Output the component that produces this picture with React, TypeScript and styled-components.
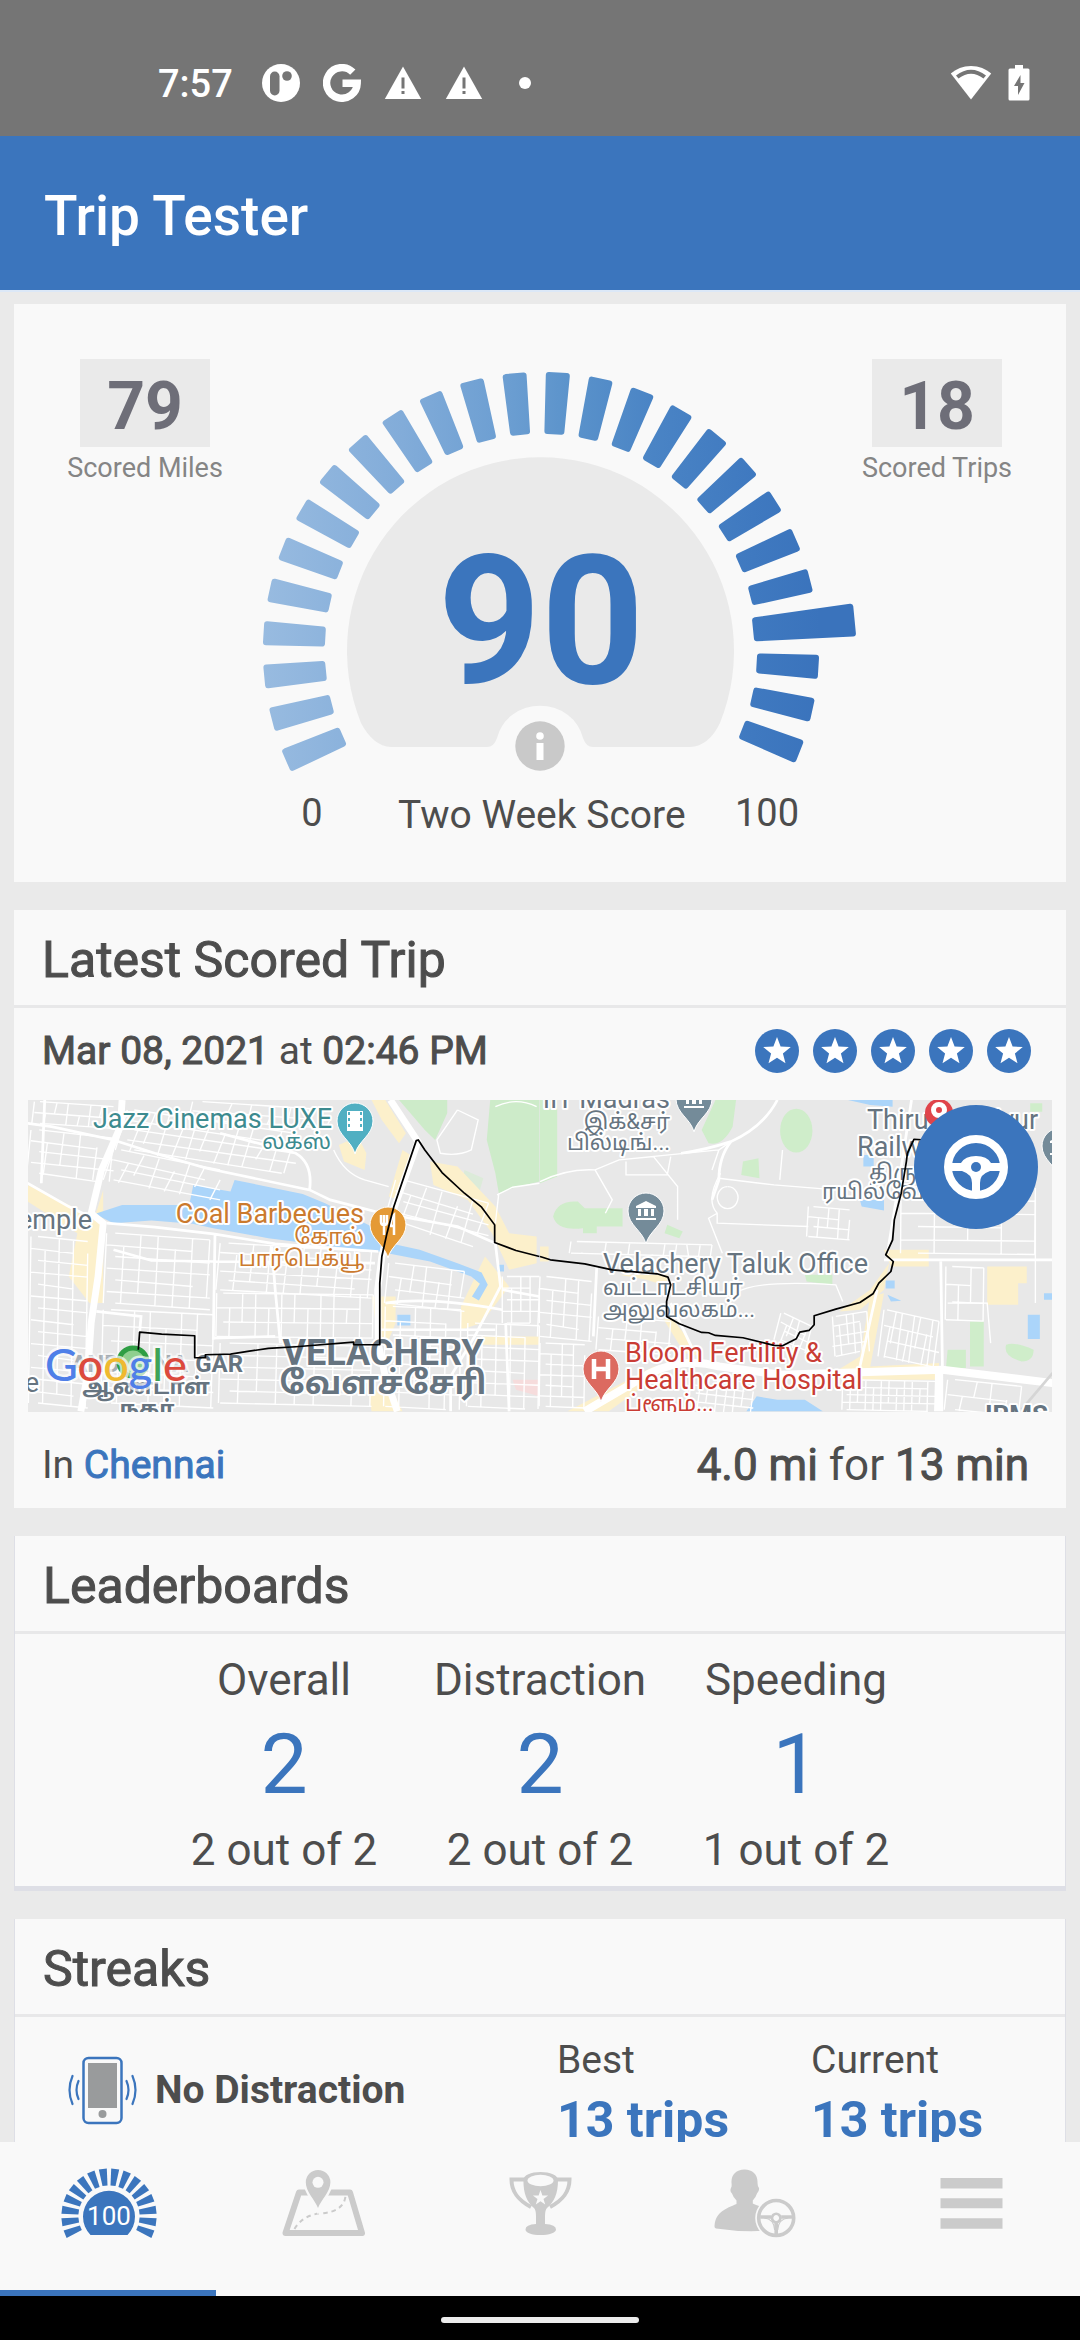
import React from "react";
import styled, { createGlobalStyle, css } from "styled-components";

const BLUE = "#3b75bd";
const INK = "#4d4d4d";
const CARD = "#f9f9f9";
const MUTED = "#cbcbcb";

const GlobalStyle = createGlobalStyle`
  *, *::before, *::after { box-sizing: border-box; }
  body { margin: 0; background: #eaeaea; }
  button { font: inherit; color: inherit; border: 0; padding: 0; background: none; cursor: pointer; }
  h1, h2, p, dl, dt, dd, ul { margin: 0; padding: 0; }
  svg { display: block; }
`;

/* Regular weight thickened by an outline, as the platform's synthetic bold. */
const syntheticBold = css`
  font-weight: 400;
  -webkit-text-stroke: 1px currentColor;
`;

const Screen = styled.div`
  display: flex;
  flex-direction: column;
  height: 100vh;
  overflow: hidden;
  background: #eaeaea;
  color: ${INK};
  font-family: Roboto, "Noto Sans", sans-serif;
`;

const StatusBar = styled.div`
  flex: none;
  display: flex;
  align-items: center;
  justify-content: space-between;
  height: 136px;
  padding: 30px 50px 0 158px;
  background: #757575;
  color: #fff;
`;

const StatusGroup = styled.div<{ $gap: number }>`
  display: flex;
  align-items: center;
  gap: ${(p) => p.$gap}px;
`;

const Clock = styled.span`
  margin-right: 6px;
  padding-top: 2px;
  font-size: 38px;
  line-height: 44px;
  font-weight: 500;
`;

const AppBar = styled.header`
  flex: none;
  display: flex;
  align-items: center;
  height: 154px;
  padding: 6px 44px 0;
  background: ${BLUE};
  color: #fff;
`;

const AppTitle = styled.h1`
  font-size: 55px;
  line-height: 64px;
  font-weight: 500;
`;

const Content = styled.main`
  flex: 1;
  min-height: 0;
  overflow: hidden;
  display: flex;
  flex-direction: column;
  gap: 28px;
  padding: 12px 14px 0;
  border-top: 2px solid #dce8f7;
`;

const Card = styled.section<{ $outlined?: boolean }>`
  flex: none;
  background: ${CARD};
  ${(p) =>
    p.$outlined &&
    css`
      border: solid #dedfe6;
      border-width: 0 1px 5px;
    `}
`;

const CardHeader = styled.div`
  display: flex;
  align-items: center;
  height: 98px;
  padding: 4px 28px 0;
  border-bottom: 3px solid #e8e8e9;
`;

const CardTitle = styled.h2`
  font-size: 50px;
  line-height: 60px;
  ${syntheticBold}
`;

/* ---------- Score card ---------- */

const ScoreLayout = styled.div`
  display: flex;
  align-items: flex-start;
  justify-content: space-between;
  height: 578px;
  padding: 55px 53px 0 55px;
`;

const Stat = styled.div`
  flex: none;
  display: flex;
  flex-direction: column;
  align-items: center;
  width: 152px;
`;

const StatValue = styled.strong`
  width: 130px;
  height: 88px;
  padding-top: 4px;
  background: #eaeaea;
  color: #6e6e78;
  font-size: 66px;
  line-height: 88px;
  font-weight: 700;
  text-align: center;
`;

const StatLabel = styled.span`
  color: #858585;
  font-size: 27px;
  line-height: 42px;
  white-space: nowrap;
`;

const Gauge = styled.div`
  flex: 1;
  max-width: 640px;
`;

const GaugeFace = styled.div`
  position: relative;

  & > svg {
    width: 100%;
    height: auto;
  }
`;

const GaugeScore = styled.strong`
  position: absolute;
  inset: 0;
  display: flex;
  align-items: center;
  justify-content: center;
  padding-top: 110px;
  color: ${BLUE};
  font-size: 180px;
  line-height: 200px;
  font-weight: 700;
`;

const InfoButton = styled.button`
  position: absolute;
  left: 50%;
  bottom: 4px;
  width: 50px;
  height: 50px;
  margin-left: -26px;
`;

const GaugeLegend = styled.div`
  display: grid;
  grid-template-columns: 172px 284px 170px;
  align-items: start;
  justify-content: start;
  margin-top: 16px;
  padding-left: 5px;
  font-size: 39px;
  line-height: 48px;
  text-align: center;
  white-space: nowrap;
`;

const LegendBound = styled.span`
  font-size: 38px;
  line-height: 44px;
`;

/* ---------- Trip card ---------- */

const TripRow = styled.div<{ $end?: boolean }>`
  display: flex;
  align-items: center;
  justify-content: space-between;
  height: ${(p) => (p.$end ? 96 : 92)}px;
  padding: ${(p) => (p.$end ? "10px 37px 0 28px" : "0 35px 6px 28px")};
`;

const TripText = styled.p<{ $large?: boolean }>`
  font-size: ${(p) => (p.$large ? 44 : 39)}px;
  line-height: 52px;

  b { ${syntheticBold} }
`;

const CityLink = styled.a`
  color: ${BLUE};
  text-decoration: none;
  ${syntheticBold}
`;

const Stars = styled.div`
  display: flex;
  gap: 14px;
`;

const MapFrame = styled.div`
  position: relative;
  height: 312px;
  margin: 0 14px;
  overflow: hidden;

  & > svg {
    width: 100%;
    height: 100%;
  }
`;

const DriveButton = styled.button`
  position: absolute;
  top: 5px;
  right: 14px;
  width: 124px;
  height: 124px;
  border-radius: 50%;
  background: ${BLUE};
`;

/* ---------- Leaderboards ---------- */

const Boards = styled.dl`
  display: grid;
  grid-template-columns: repeat(3, 256px);
  justify-content: center;
  padding: 20px 0 10px;
`;

const Board = styled.div`
  display: flex;
  flex-direction: column;
  align-items: center;
  padding: 20px 0 10px;
  font-size: 44px;
  line-height: 52px;
`;

const BoardGrid = styled(Boards)`
  padding: 0;
`;

const Rank = styled.dd`
  color: ${BLUE};
  font-size: 84px;
  line-height: 118px;
`;

/* ---------- Streaks ---------- */

const StreakRow = styled.div`
  display: grid;
  grid-template-columns: 1fr 254px 254px;
  align-items: center;
  padding-top: 13px;
`;

const StreakName = styled.div`
  display: flex;
  align-items: center;
  gap: 18px;
  padding-left: 52px;
  font-size: 39px;
  line-height: 48px;
  font-weight: 700;
`;

const StreakStat = styled.div`
  display: flex;
  flex-direction: column;
  font-size: 39px;
  line-height: 60px;
`;

const StreakValue = styled.strong`
  color: ${BLUE};
  font-size: 50px;
  line-height: 60px;
  font-weight: 700;
`;

/* ---------- Bottom navigation ---------- */

const TabBar = styled.nav`
  flex: none;
  display: flex;
  height: 154px;
  background: ${CARD};
`;

const Tab = styled.button<{ $active?: boolean }>`
  flex: 1;
  display: flex;
  justify-content: center;
  align-items: flex-start;
  padding-top: 24px;
  color: ${(p) => (p.$active ? BLUE : MUTED)};
  border-bottom: 6px solid ${(p) => (p.$active ? BLUE : "transparent")};
`;

const SystemBar = styled.div`
  flex: none;
  display: flex;
  justify-content: center;
  align-items: center;
  height: 44px;
  padding-top: 4px;
  background: #000;
`;

const HomeHandle = styled.span`
  width: 198px;
  height: 6px;
  border-radius: 3px;
  background: #ebebeb;
`;

/* ---------- Drawings ---------- */

type Point = [number, number];

const ray = (cx: number, cy: number, deg: number, r0: number, r1: number, w0: number, w1: number) => {
  const a = (deg * Math.PI) / 180;
  const at = (r: number, off: number): Point => [
    cx + r * Math.cos(a) - off * Math.sin(a),
    cy - r * Math.sin(a) - off * Math.cos(a),
  ];
  return [at(r0, w0 / 2), at(r1, w1 / 2), at(r1, -w1 / 2), at(r0, -w0 / 2)]
    .map(([x, y]) => `${x.toFixed(1)},${y.toFixed(1)}`)
    .join(" ");
};

const starPoints = (cx: number, cy: number, outer: number, inner: number) =>
  Array.from({ length: 10 }, (_, i) => {
    const r = i % 2 ? inner : outer;
    const a = -Math.PI / 2 + (i * Math.PI) / 5;
    return `${(cx + r * Math.cos(a)).toFixed(1)},${(cy + r * Math.sin(a)).toFixed(1)}`;
  }).join(" ");

const GaugeDial = () => (
  <svg viewBox="221 359 640 416" aria-hidden="true">
    <defs>
      <linearGradient id="dial" gradientUnits="userSpaceOnUse" x1="263" y1="0" x2="820" y2="0">
        <stop offset="0" stopColor="#98bbe0" />
        <stop offset="0.25" stopColor="#82acd9" />
        <stop offset="0.45" stopColor="#6a9dd1" />
        <stop offset="0.55" stopColor="#5b93cb" />
        <stop offset="0.7" stopColor="#4a84c5" />
        <stop offset="0.88" stopColor="#3f79c0" />
        <stop offset="1" stopColor="#3a73bc" />
      </linearGradient>
    </defs>
    <g fill="url(#dial)" stroke="url(#dial)" strokeWidth="6" strokeLinejoin="round">
      {Array.from({ length: 26 }, (_, i) => {
        const marked = i === 22;
        return (
          <polygon
            key={i}
            points={ray(541, 650, 203.5 - 9 * i, marked ? 216 : 219, marked ? 312 : 275, marked ? 18 : 14, marked ? 27 : 18)}
          />
        );
      })}
    </g>
    <path
      fill="#eaeaea"
      d="M391 747Q373 746 361 723A193.500 193.500 0 1 1 720 723Q709 746 690 747H593Q586 747 583 738A44 41 0 0 0 497 738Q494 747 487 747Z"
    />
  </svg>
);

const InfoIcon = () => (
  <svg width="50" height="50" viewBox="0 0 50 50" aria-hidden="true">
    <circle cx="25" cy="25" r="24.700" fill="#c9c9c9" />
    <circle cx="25" cy="15" r="3.800" fill="#fff" />
    <rect x="21.500" y="22" width="7" height="17" fill="#fff" />
  </svg>
);

const StarBadge = () => (
  <svg width="44" height="44" viewBox="0 0 44 44" aria-hidden="true">
    <circle cx="22" cy="22" r="22" fill={BLUE} />
    <polygon points={starPoints(22, 22.5, 14.5, 6.2)} fill="#fff" />
  </svg>
);

const Wheel = ({ size }: { size: number }) => (
  <svg width={size} height={size} viewBox="0 0 124 124" aria-hidden="true">
    <g transform="translate(62 62)" fill="none" stroke="#fff">
      <circle r="28" strokeWidth="8" />
      <path d="M-26 -4H-15Q-11 -11 0 -11Q11 -11 15 -4H26V4H14Q4 7 4 16V26H-4V16Q-4 7 -14 4H-26Z" fill="#fff" stroke="none" />
      <circle r="5" fill={BLUE} stroke="none" />
    </g>
  </svg>
);

const PhoneIcon = () => (
  <svg width="70" height="70" viewBox="0 0 70 70" fill="none" stroke={BLUE} strokeLinecap="round" aria-hidden="true">
    <rect x="16.500" y="3" width="38" height="65" rx="5" strokeWidth="2.500" />
    <rect x="21" y="8" width="29" height="45" fill="#999b9c" stroke="none" />
    <circle cx="35.500" cy="59" r="4" fill="#999b9c" stroke="none" />
    <path d="M11.500 26Q7.500 35 11.500 44M5.500 21Q-.5 35 5.500 49M59.500 26Q63.500 35 59.500 44M65.500 21Q71.500 35 65.500 49" strokeWidth="2.200" />
  </svg>
);

const ScoreTabIcon = () => (
  <svg width="100" height="76" viewBox="0 0 100 76" aria-hidden="true">
    {Array.from({ length: 16 }, (_, i) => (
      <polygon key={i} points={ray(51, 50, 202.5 - 15 * i, 30.5, 47.5, 5, 8)} fill="currentColor" />
    ))}
    <path d="M32.500 69A26 26 0 1 1 69.500 69Z" fill="currentColor" />
    <text x="51" y="59" textAnchor="middle" fill="#fff" fontSize="26" fontWeight="400" fontFamily="Roboto, sans-serif">
      100
    </text>
  </svg>
);

const MapTabIcon = () => (
  <svg width="100" height="76" viewBox="0 0 100 76" fill="none" stroke="currentColor" aria-hidden="true">
    <path d="M25 26.500H76L88 67H11.500Z" strokeWidth="6" strokeLinejoin="round" />
    <path d="M20.500 63Q29 49 46 47.500Q70 46 71.500 30" strokeWidth="2" strokeDasharray="4.500 4" />
    <path
      d="M44 42C41 34 31.800 26 31.800 16.300a12.300 12.300 0 0 1 24.600 0C56.400 26 47 34 44 42Z"
      fill="currentColor"
      stroke={CARD}
      strokeWidth="5"
      paintOrder="stroke"
    />
    <circle cx="44" cy="16.300" r="5.500" fill={CARD} stroke="none" />
  </svg>
);

const TrophyTabIcon = () => (
  <svg width="100" height="76" viewBox="0 0 100 76" fill="currentColor" aria-hidden="true">
    <path d="M36 13.500H21.500C21.500 26 28 34 41 41M65 13.500H79.500C79.500 26 73 34 60 41" fill="none" stroke="currentColor" strokeWidth="4" />
    <path d="M33.400 14C33.400 9 41 6 50.500 6S68 9 68 14C68 28 64 36 57 42Q55 44 55 50V58Q66 58.500 66 63.500C66 67 59 69 50.500 69S35.500 67 35.500 63.500Q35.500 58.500 46 58V50Q46 44 44 42C37 36 33.400 28 33.400 14Z" />
    <ellipse cx="50.500" cy="14.500" rx="13" ry="5.800" fill={CARD} />
    <polygon points={starPoints(50.5, 32, 8, 3.2)} fill={CARD} />
  </svg>
);

const DriverTabIcon = () => (
  <svg width="100" height="76" viewBox="0 0 100 76" fill="currentColor" aria-hidden="true">
    <path d="M38.500 3.500C47 3.500 52 9 51.500 17Q51.500 20 53 22Q53.500 25 51 27.500Q50 31 46.800 34.500V37.500C54 41 64 42 66 50L68 64Q40 67 10 62.500Q8 62 8.600 59C10 46 20 42.500 30.500 38V34.500Q27 31 26 27.500Q23.500 25 25 22Q26 20 25.500 17C25 9 30 3.500 38.500 3.500Z" />
    <circle cx="70.200" cy="52" r="21" fill={CARD} />
    <g transform="translate(70.200 52)" fill="none" stroke="currentColor">
      <circle r="17.500" strokeWidth="3.600" />
      <circle r="4.200" strokeWidth="2.600" />
      <path d="M-16 -1H-5M5 -1H16M0 5V16" strokeWidth="3.600" />
      <path d="M-12 0Q-2 1 -1.500 12M12 0Q2 1 1.500 12" strokeWidth="1.200" />
    </g>
  </svg>
);

const MenuTabIcon = () => (
  <svg width="100" height="76" viewBox="0 0 100 76" fill="currentColor" aria-hidden="true">
    <path d="M18.500 12h62v10.500h-62zM18.500 32.300h62v10h-62zM18.500 52.300h62v10.500h-62z" />
  </svg>
);

const AppBadge = () => (
  <svg width="38" height="38" viewBox="0 0 38 38" aria-hidden="true">
    <circle cx="19" cy="19" r="19" fill="#fff" />
    <rect x="8" y="7.500" width="9.500" height="24" rx="4.700" fill="#757575" />
    <circle cx="25" cy="12" r="4.800" fill="#757575" />
  </svg>
);

const GoogleBadge = () => (
  <svg width="38" height="38" viewBox="0 0 38 38" fill="none" stroke="#fff" strokeWidth="7.400" aria-hidden="true">
    <path d="M29.800 8.200A15.300 15.300 0 1 0 34.200 19.300H19.500" />
  </svg>
);

const WarningBadge = () => (
  <svg width="38" height="38" viewBox="0 0 38 38" aria-hidden="true">
    <path d="M19 2.500L37.200 35H.8Z" fill="#fff" />
    <path d="M17.500 13.500h3v11h-3zM17.500 27h3v3h-3z" fill="#757575" />
  </svg>
);

const DotBadge = () => (
  <svg width="38" height="38" viewBox="0 0 38 38" aria-hidden="true">
    <circle cx="19" cy="19" r="6" fill="#fff" />
  </svg>
);

const WifiIcon = () => (
  <svg width="42" height="36" viewBox="0 0 42 36" aria-hidden="true">
    <path d="M21 1C13 1 6 4 .8 8.500L21 34.500L41.200 8.500C36 4 29 1 21 1Z" fill="#fff" />
    <path d="M6 10.500Q21 -1 36 10.500L33.500 13.500Q21 4 8.500 13.500Z" fill="#757575" />
  </svg>
);

const BatteryIcon = () => (
  <svg width="22" height="36" viewBox="0 0 22 36" aria-hidden="true">
    <path d="M7 0h8v3.500h5q1.500 0 1.500 1.500v29q0 1.500-1.500 1.500H2Q.5 35.500.5 34V5Q.5 3.500 2 3.500h5z" fill="#fff" />
    <path d="M12.500 10L6 21h4v9l6.500-12h-4z" fill="#757575" />
  </svg>
);

/* ---------- Map ---------- */

const Label = styled.text<{ $tone: string; $strong?: boolean }>`
  fill: ${(p) => p.$tone};
  stroke: #fff;
  stroke-width: 4px;
  stroke-linejoin: round;
  paint-order: stroke;
  font-family: Roboto, "Noto Sans", "Noto Sans Tamil", sans-serif;
  font-weight: ${(p) => (p.$strong ? 700 : 400)};
`;

/* A block of side streets: a slightly tilted lattice filling the given box. */
const block = (x0: number, y0: number, x1: number, y1: number, cols: number, rows: number, tilt = 0) => {
  const parts: string[] = [];
  for (let c = 0; c <= cols; c++) {
    const x = x0 + ((x1 - x0) * c) / cols;
    const from = c % 3 === 1 ? y0 + (y1 - y0) / rows : y0;
    const to = c % 4 === 2 ? y1 - (y1 - y0) / rows : y1;
    parts.push(`M${x} ${from + tilt * (c / cols)}L${x - tilt / 2} ${to + tilt * (c / cols)}`);
  }
  for (let r = 0; r <= rows; r++) {
    const y = y0 + ((y1 - y0) * r) / rows;
    const from = r % 2 ? x0 : x0 + (x1 - x0) / (cols * 2);
    parts.push(`M${from} ${y}L${x1 - (r % 3 === 1 ? (x1 - x0) / cols : 0)} ${y + tilt}`);
  }
  return parts.join("");
};

const Pin = ({ x, y, color, children }: { x: number; y: number; color: string; children?: React.ReactNode }) => (
  <g transform={`translate(${x} ${y})`}>
    <path d="M0 33C-3 20 -18 14 -18 0a18 18 0 0 1 36 0C18 14 3 20 0 33Z" fill={color} stroke="#fff" strokeWidth="1" />
    {children}
  </g>
);

const Museum = () => (
  <g fill="#fff">
    <path d="M0-10L10-5V-3H-10V-5ZM-10 7H10V9H-10Z" />
    <path d="M-8-2H-5V5H-8ZM-2-2H2V5H-2ZM5-2H8V5H5Z" />
  </g>
);

const west = "translate(-28 -10) scale(.344 .333)";
const east = "translate(512 -10) scale(.344 .333)";
const GREY = "#667480";

const TripMap = () => (
  <svg viewBox="0 0 1024 312" preserveAspectRatio="xMidYMid slice" role="img" aria-label="Route of the latest trip">
    <rect width="1024" height="312" fill="#e8e8e8" />
    <g transform={west}>
      <g fill="#cdebc9">
        <path d="M1160 30H1300V70L1265 150L1235 120ZM1425 30H1568V275L1490 295L1450 310L1440 250L1415 150Z" />
        <path d="M1350 240l55 25-10 35-50-25z" fill="#dcebd9" />
      </g>
      <g fill="#fcf0cb">
        <path d="M80 285L210 350L270 400L300 300V640H260L200 560L225 430L80 335ZM985 165L1040 140L1065 190L1060 240L1000 215ZM1080 30H1120L1180 130L1160 160L1110 90Z" />
        <path d="M1250 215L1330 230L1440 350L1480 430L1560 440V520L1480 540L1430 430L1360 330L1260 285ZM1410 500L1480 590L1400 700L1340 720V650ZM1080 620H1150V700L1130 750H1100ZM1400 740H1568V765H1400ZM1170 180L1200 200L1160 330L1130 320ZM1070 900H1140L1170 965H1080Z" />
      </g>
      <path
        fill="#abd5fa"
        d="M275 372L355 345L550 345L562 285L670 305L682 270L880 312L945 340L1080 410L1110 455L1220 480L1330 520L1400 548L1418 585L1392 632L1372 620L1395 582L1370 560L1250 515L1100 485L950 468L780 445L620 415L560 402L440 392L330 400ZM1155 675H1193V707H1155ZM1445 525h20v20h-20z"
      />
      <path d="M1490 870H1568V920L1500 900Z" fill="#f6dcdc" />
      <g fill="none" stroke="#fff" strokeWidth="4">
        <path d={block(90, 120, 330, 250, 5, 4, 25)} />
        <path d={block(370, 60, 860, 180, 12, 4, 70)} />
        <path d={block(330, 180, 640, 270, 7, 3, 60)} />
        <path d={block(90, 440, 255, 940, 4, 14, 15)} />
        <path d={block(310, 430, 610, 640, 6, 6, 20)} />
        <path d={block(300, 660, 620, 940, 7, 6, 15)} />
        <path d={block(640, 460, 1080, 600, 9, 5, 25)} />
        <path d={block(630, 610, 1085, 740, 12, 3, 5)} />
        <path d={block(640, 760, 1080, 940, 8, 5, 10)} />
        <path d={block(1130, 520, 1350, 640, 6, 3, 25)} />
        <path d={block(1120, 650, 1340, 950, 5, 7, 10)} />
        <path d={block(1360, 700, 1568, 950, 5, 7, 8)} />
        <path d={block(1150, 270, 1420, 400, 6, 4, 70)} />
        <path d={block(1460, 560, 1568, 700, 4, 4, 0)} />
        <path d={block(100, 35, 330, 100, 7, 2, 15)} />
        <path d={block(560, 35, 960, 90, 7, 2, 25)} />
        <path d="M1330 60L1270 150L1280 190Q1330 200 1370 180L1390 90L1330 60M970 180Q1000 250 1060 270L1130 290M1440 50Q1500 20 1560 50M1450 310L1440 400M1568 280L1490 292L1445 315" />
      </g>
      <g fill="none" stroke="#fff" strokeWidth="8">
        <path d="M80 100L150 110L330 150L450 190L600 235L900 300L960 330L1110 370L1330 410L1440 460M310 400L450 412L620 432L800 462L1100 485M80 280L200 350L270 385M330 480L440 512L620 515L1090 520M640 130L860 190Q910 220 900 300M625 430L620 750M790 470L800 600L815 760M620 745L800 740M280 665L410 680L406 727M130 30L120 280" />
        <path d="M1120 640Q1250 620 1460 660M1100 720H1440M1440 460L1455 590L1380 740L1310 860V965M1460 600L1568 620M1470 700L1480 965" />
      </g>
      <g fill="none" stroke="#fff" strokeWidth="20">
        <path d="M355 30L350 110L295 240L265 370L300 400L285 560L265 700L255 850L235 965" />
        <path d="M1135 30L1215 155L1140 370L1110 500L1098 600L1100 765L1120 860L1155 965" />
      </g>
    </g>
    <g transform={east}>
      <g fill="#cfedca">
        <path d="M0 30H50V260L0 280ZM510 30H570L560 110Q530 170 490 160L470 120ZM38 380Q50 330 110 335L130 355H240V410H165V430H125V415Q50 425 38 380ZM370 405L415 425L405 445L362 430Z" />
        <ellipse cx="745" cy="122" rx="47" ry="66" />
        <path d="M590 215L635 205L638 265L585 255ZM770 555H850V585L775 575ZM1250 695H1290V830H1250ZM1185 780H1238V835H1180ZM1355 765Q1380 755 1435 780Q1435 815 1400 815Q1345 800 1355 765ZM1425 40h35v25h-35z" />
      </g>
      <g fill="#fcf0cb">
        <path d="M0 470H25V515H0ZM1000 480H1130V530H1020ZM1015 520L1000 600L930 660L870 665L960 600ZM960 620L1000 610L960 830L1160 820V870H820L930 800ZM1300 530H1415V580H1390V645H1300ZM380 680L470 800L420 790L360 690ZM230 555H370V590L310 570ZM80 965L330 830L380 830L200 965Z" />
      </g>
      <path
        fill="#abd5fa"
        d="M895 30H1025V50L960 45ZM930 330H1000V362L935 350ZM940 195h30v35h-30zM1418 675H1453V748H1418ZM600 965L630 920L690 930L770 930L822 965ZM1005 572h26v24h-26zM1010 615l40 18-30 2zM1465 610h25v20h-25z"
      />
      <g fill="none" stroke="#fff" strokeWidth="4">
        <path d={block(780, 350, 900, 440, 4, 3, 10)} />
        <path d={block(1050, 250, 1440, 490, 4, 6, 4)} />
        <path d={block(1180, 530, 1290, 690, 3, 3, 4)} />
        <path d={block(0, 560, 150, 740, 4, 5, 15)} />
        <path d={block(170, 680, 380, 780, 5, 3, 15)} />
        <path d={block(0, 760, 130, 950, 4, 6, 5)} />
        <path d={block(1000, 660, 1160, 800, 9, 3, 35)} />
        <path d={block(850, 680, 950, 800, 5, 4, -15)} />
        <path d={block(880, 870, 1150, 960, 12, 4, 5)} />
        <path d={block(440, 860, 620, 960, 7, 4, 20)} />
        <path d={block(90, 455, 500, 490, 12, 1, 10)} />
        <path d={block(1185, 870, 1400, 960, 5, 2, 20)} />
        <path d={block(700, 670, 790, 750, 5, 3, 40)} />
        <path d="M0 275Q80 235 160 240L230 210L520 180M160 240L210 330L190 370M230 210L330 200L400 290V390M250 215V255H370L380 200M525 250Q480 330 515 370V400L780 410M520 265L680 285L860 300M515 370L490 385L530 490M705 180L697 270M545 290a30 33 0 1 0 1 0M570 610Q620 570 860 585L880 635M500 240L520 180L555 155" />
      </g>
      <g fill="none" stroke="#fff" strokeWidth="8">
        <path d="M690 30Q650 110 555 155Q480 180 410 190M555 155Q520 200 520 270L500 330M1080 30L1040 300L1010 490M1000 510H1490M1165 515L1170 840M980 600L930 830M165 530L155 740M380 640L440 770" />
        <path d="M1440 330V640M1185 640L1300 640L1310 760" strokeWidth="4" />
      </g>
      <g fill="none" stroke="#fff" strokeWidth="24">
        <path d="M130 965L320 850Q420 800 520 830L700 855L1000 845L1170 840L1490 880M1160 840V965" />
        <path d="M1400 960L1490 850" stroke="#d5d5d5" strokeWidth="8" />
      </g>
    </g>

    <g fontSize="27">
      <g textAnchor="end">
        <Label $tone="#3d8b8f" x="304" y="28">Jazz Cinemas LUXE</Label>
        <Label $tone="#3d8b8f" x="303" y="49" fontSize="22">லக்ஸ்</Label>
        <Label $tone="#cb7a2e" x="336" y="123">Coal Barbecues</Label>
        <Label $tone="#cb7a2e" x="336" y="144" fontSize="22">கோல்</Label>
        <Label $tone="#cb7a2e" x="336" y="166" fontSize="22">பார்பெக்யூ</Label>
        <Label $tone={GREY} x="64" y="129">emple</Label>
        <Label $tone={GREY} x="11" y="292">e</Label>
        <Label $tone={GREY} x="642" y="8">IIT Madras</Label>
        <Label $tone={GREY} x="642" y="29" fontSize="22">இக்&amp;சர்</Label>
        <Label $tone={GREY} x="642" y="50" fontSize="22">பில்டிங்...</Label>
        <Label $tone={GREY} $strong x="215" y="272" fontSize="24">GAR</Label>
        <Label $tone={GREY} $strong x="160" y="272" fontSize="24" opacity="0.5">ANDAL NA</Label>
      </g>
      <g textAnchor="middle">
        <Label $tone={GREY} $strong x="355" y="265" fontSize="36">VELACHERY</Label>
        <Label $tone={GREY} $strong x="355" y="294" fontSize="32">வேளச்சேரி</Label>
        <Label $tone={GREY} $strong x="118" y="294" fontSize="22">ஆண்டாள்</Label>
        <Label $tone={GREY} $strong x="119" y="316" fontSize="22">நகர்</Label>
      </g>
      <Label $tone={GREY} x="575" y="173">Velachery Taluk Office</Label>
      <Label $tone={GREY} x="575" y="195" fontSize="22">வட்டாட்சியர்</Label>
      <Label $tone={GREY} x="575" y="217" fontSize="22">அலுவலகம்...</Label>
      <Label $tone="#c93c34" x="597" y="262">Bloom Fertility &amp;</Label>
      <Label $tone="#c93c34" x="597" y="289">Healthcare Hospital</Label>
      <Label $tone="#c93c34" x="597" y="311" fontSize="22">ப்ளூம்...</Label>
      <Label $tone={GREY} x="839" y="29">Thiruvanmiyur</Label>
      <Label $tone={GREY} x="829" y="56">Railway</Label>
      <Label $tone={GREY} x="841" y="80" fontSize="22">திரு</Label>
      <Label $tone={GREY} x="794" y="99" fontSize="22">ரயில்வே</Label>
      <Label $tone={GREY} $strong x="957" y="324" fontSize="26">IRMS</Label>
    </g>

    <Pin x={327} y={21} color="#50afc2">
      <path d="M-8-10H8V10H-8Z" fill="#fff" />
      <path d="M-6-9V9M6-9V9" stroke="#50afc2" strokeWidth="2" strokeDasharray="3 3" />
    </Pin>
    <Pin x={360} y={125} color="#e59a35">
      <path d="M-7-10V-3Q-7 0-4 0V10M-4-10V0M-1-10V-3Q-1 0-4 0M6 10V-10Q2-6 3 1H6" fill="none" stroke="#fff" strokeWidth="2.500" />
    </Pin>
    <Pin x={618} y={111} color="#748b99"><Museum /></Pin>
    <Pin x={666} y={-1} color="#748b99"><Museum /></Pin>
    <Pin x={1032} y={46} color="#748b99"><Museum /></Pin>
    <Pin x={573} y={269} color="#dc6a60">
      <path d="M-7-10V10M7-10V10M-7 0H7" fill="none" stroke="#fff" strokeWidth="4.500" />
    </Pin>
    <circle cx="911" cy="13" r="14" fill="#e0444a" />
    <circle cx="911" cy="10" r="5.500" fill="#e0444a" stroke="#fff" strokeWidth="5" />

    <circle cx="105" cy="262" r="14" fill="#8fcf8f" stroke="#2f9e44" strokeWidth="5" />
    <g fill="none" stroke="#000" strokeWidth="5" strokeLinejoin="round">
      <path
        transform={west}
        d="M402 780L406 727L470 733L566 738V804H597V795L670 793L720 785L780 776L860 771L1028 757V765H1104V580L1110 500L1125 430L1145 350L1210 152L1216 150L1235 180L1285 248L1350 310L1400 352L1438 405V458L1500 482L1568 500"
      />
      <path
        transform={east}
        d="M0 500L30 510L130 522L210 540L340 552L372 562L380 585L368 635V680L405 702L470 728L490 729L510 737L590 744L680 767L705 768L745 747L755 727L782 722L797 705V678L860 658L930 638L968 612L985 580L1020 545L1027 515L1005 495L1025 450L1030 390L1050 310L1065 215L1068 190L1087 148L1110 150"
      />
    </g>
    <text
      x="17"
      y="281"
      fontSize="45"
      fontWeight="500"
      fontFamily="Lato, Roboto, sans-serif"
      stroke="#fff"
      strokeOpacity="0.7"
      strokeWidth="5"
      paintOrder="stroke"
    >
      <tspan fill="#4f7fe8">G</tspan>
      <tspan fill="#dc4a3d">o</tspan>
      <tspan fill="#efb92f">o</tspan>
      <tspan fill="#4f7fe8">g</tspan>
      <tspan fill="#3fa356">l</tspan>
      <tspan fill="#dc4a3d">e</tspan>
    </text>
  </svg>
);

/* ---------- Data ---------- */

const boards = [
  { name: "Overall", rank: 2, note: "2 out of 2" },
  { name: "Distraction", rank: 2, note: "2 out of 2" },
  { name: "Speeding", rank: 1, note: "1 out of 2" },
];

const tabs = [
  { name: "Score", Icon: ScoreTabIcon },
  { name: "Trips", Icon: MapTabIcon },
  { name: "Rewards", Icon: TrophyTabIcon },
  { name: "Driver", Icon: DriverTabIcon },
  { name: "Menu", Icon: MenuTabIcon },
];

export default function App() {
  return (
    <Screen>
      <GlobalStyle />
      <StatusBar>
        <StatusGroup $gap={23}>
          <Clock>7:57</Clock>
          <AppBadge />
          <GoogleBadge />
          <WarningBadge />
          <WarningBadge />
          <DotBadge />
        </StatusGroup>
        <StatusGroup $gap={16}>
          <WifiIcon />
          <BatteryIcon />
        </StatusGroup>
      </StatusBar>
      <AppBar>
        <AppTitle>Trip Tester</AppTitle>
      </AppBar>

      <Content>
        <Card>
          <ScoreLayout>
            <Stat>
              <StatValue>79</StatValue>
              <StatLabel>Scored Miles</StatLabel>
            </Stat>
            <Gauge>
              <GaugeFace>
                <GaugeDial />
                <GaugeScore>90</GaugeScore>
                <InfoButton aria-label="About this score">
                  <InfoIcon />
                </InfoButton>
              </GaugeFace>
              <GaugeLegend>
                <LegendBound>0</LegendBound>
                <span>Two Week Score</span>
                <LegendBound>100</LegendBound>
              </GaugeLegend>
            </Gauge>
            <Stat>
              <StatValue>18</StatValue>
              <StatLabel>Scored Trips</StatLabel>
            </Stat>
          </ScoreLayout>
        </Card>

        <Card>
          <CardHeader>
            <CardTitle>Latest Scored Trip</CardTitle>
          </CardHeader>
          <TripRow>
            <TripText>
              <b>Mar 08, 2021</b> at <b>02:46 PM</b>
            </TripText>
            <Stars role="img" aria-label="5 stars">
              {[1, 2, 3, 4, 5].map((n) => (
                <StarBadge key={n} />
              ))}
            </Stars>
          </TripRow>
          <MapFrame>
            <TripMap />
            <DriveButton aria-label="Start drive">
              <Wheel size={124} />
            </DriveButton>
          </MapFrame>
          <TripRow $end>
            <TripText>
              In <CityLink href="#chennai">Chennai</CityLink>
            </TripText>
            <TripText $large>
              <b>4.0 mi</b> for <b>13 min</b>
            </TripText>
          </TripRow>
        </Card>

        <Card $outlined>
          <CardHeader>
            <CardTitle>Leaderboards</CardTitle>
          </CardHeader>
          <BoardGrid>
            {boards.map((b) => (
              <Board key={b.name}>
                <dt>{b.name}</dt>
                <Rank>{b.rank}</Rank>
                <dd>{b.note}</dd>
              </Board>
            ))}
          </BoardGrid>
        </Card>

        <Card $outlined>
          <CardHeader>
            <CardTitle>Streaks</CardTitle>
          </CardHeader>
          <StreakRow>
            <StreakName>
              <PhoneIcon />
              No Distraction
            </StreakName>
            <StreakStat>
              Best
              <StreakValue>13 trips</StreakValue>
            </StreakStat>
            <StreakStat>
              Current
              <StreakValue>13 trips</StreakValue>
            </StreakStat>
          </StreakRow>
        </Card>
      </Content>

      <TabBar>
        {tabs.map(({ name, Icon }, i) => (
          <Tab key={name} aria-label={name} $active={i === 0}>
            <Icon />
          </Tab>
        ))}
      </TabBar>
      <SystemBar>
        <HomeHandle />
      </SystemBar>
    </Screen>
  );
}
